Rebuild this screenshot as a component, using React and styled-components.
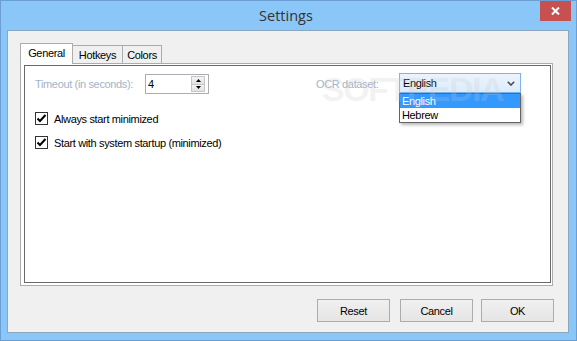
import styled, { createGlobalStyle } from 'styled-components'

const Global = createGlobalStyle`
  html, body { margin: 0; padding: 0; }
  body { width: 577px; height: 341px; overflow: hidden; background: #8ac5f7; }
  * { box-sizing: border-box; }
`;

const Window = styled.div`
  width: 577px;
  height: 341px;
  background: #8bc6f8;
  border: 1px solid #6b9fd3;
  display: flex;
  flex-direction: column;
  font-family: "Liberation Sans", Arial, sans-serif;
  font-size: 11px;
  letter-spacing: -0.35px;
  color: #000;
`;

const TitleBar = styled.div`
  height: 29px;
  display: grid;
  grid-template-columns: 1fr auto 1fr;
  align-items: start;
  padding-right: 5px;
`;

const Title = styled.div`
  grid-column: 2;
  font-family: "Open Sans", "Noto Sans", sans-serif;
  font-size: 14.5px;
  letter-spacing: 0;
  color: #333;
  line-height: 29px;
`;

const CloseBtn = styled.div`
  grid-column: 3;
  justify-self: end;
  width: 31px;
  height: 20px;
  background: #c75050;
  display: flex;
  align-items: center;
  justify-content: center;
`;

const Client = styled.div`
  flex: 1;
  margin: 0 7px 7px 6px;
  background: #f0f0f0;
  border: 1px solid #8da6bf;
  padding: 12px 15px 10px 12px;
  display: flex;
  flex-direction: column;
`;

const Tabs = styled.div`
  display: flex;
  flex-direction: column;
`;

const TabStrip = styled.div`
  display: flex;
  height: 20px;
  align-items: flex-end;
`;

const Tab = styled.div`
  width: ${p => p.w}px;
  height: ${p => (p.active ? 21 : 18)}px;
  margin-left: ${p => (p.first ? 0 : -1)}px;
  margin-bottom: ${p => (p.active ? -1 : 0)}px;
  border: 1px solid #acacac;
  border-bottom: none;
  background: ${p => (p.active ? '#fff' : '#f0f0f0')};
  position: relative;
  z-index: ${p => (p.active ? 2 : 1)};
  display: flex;
  align-items: center;
  justify-content: center;
  padding-bottom: ${p => (p.active ? 2 : 0)}px;
`;

const TabPage = styled.div`
  height: 223px;
  border: 1px solid #acacac;
  background: #fff;
  padding: 1px 1px 2px 3px;
  display: flex;
`;

const Panel = styled.div`
  flex: 1;
  border: 1px solid #6a6a6a;
  padding: 8px 10px;
  position: relative;
  display: flex;
  flex-direction: column;
`;

const Row = styled.div`
  display: flex;
  align-items: center;
  height: 20px;
`;

const Label = styled.div`
  width: ${p => p.w}px;
  margin-left: ${p => p.ml || 0}px;
  color: #a3b3c7;
`;

const SpinBox = styled.div`
  width: 64px;
  height: 20px;
  border: 1px solid #abadb3;
  background: #fff;
  display: flex;
  padding: 1px;
`;

const SpinValue = styled.div`
  flex: 1;
  padding-left: 1px;
  line-height: 16px;
`;

const SpinButtons = styled.div`
  width: 14px;
  margin-right: 2px;
  display: flex;
  flex-direction: column;
`;

const SpinBtn = styled.div`
  flex: 1;
  border: 1px solid #c6c6c6;
  margin-top: ${p => (p.down ? -1 : 0)}px;
  background: linear-gradient(#f4f4f4, #e2e2e2);
  display: flex;
  align-items: center;
  justify-content: center;
`;

const ComboWrap = styled.div`
  position: relative;
  margin-top: -2px;
`;

const Combo = styled.div`
  width: 122px;
  height: 20px;
  border: 1px solid #7eb4ea;
  background: linear-gradient(#ecf4fc, #dcecfc);
  display: flex;
  align-items: center;
  justify-content: space-between;
  padding: 0 5px 0 3px;
`;

const DropList = styled.div`
  position: absolute;
  top: 20px;
  left: 0;
  width: 122px;
  border: 1px solid #646464;
  background: #fff;
  box-shadow: 2px 2px 3px rgba(0, 0, 0, 0.28);
  z-index: 5;
`;

const Option = styled.div`
  height: 14px;
  line-height: 14px;
  padding-left: 2px;
  background: ${p => (p.selected ? '#3399ff' : '#fff')};
  color: ${p => (p.selected ? '#fff' : '#000')};
`;

const Checks = styled.div`
  margin-top: 18px;
  display: flex;
  flex-direction: column;
  gap: 11px;
`;

const CheckRow = styled.label`
  display: flex;
  align-items: center;
  gap: 6px;
  height: 13px;
`;

const Box = styled.span`
  width: 13px;
  height: 13px;
  border: 1px solid #333;
  background: #fff;
  display: flex;
  align-items: center;
  justify-content: center;
`;

const Watermark = styled.div`
  position: absolute;
  left: 297px;
  top: 4px;
  font-size: 34px;
  font-weight: bold;
  letter-spacing: -1.5px;
  color: rgba(200, 200, 200, 0.22);
  pointer-events: none;
  z-index: 9;
`;

const ButtonRow = styled.div`
  margin-top: 13px;
  margin-right: -1px;
  display: flex;
  justify-content: flex-end;
  gap: 8px;
`;

const Button = styled.div`
  width: 73px;
  height: 23px;
  border: 1px solid #acacac;
  background: linear-gradient(#f0f0f0, #e5e5e5);
  display: flex;
  align-items: center;
  justify-content: center;
  margin-right: ${p => p.extra || 0}px;
`;

const Check = () => (
  <svg width="11" height="11" viewBox="0 0 11 11">
    <path d="M1.5 5.5 L4 8 L9.5 2" fill="none" stroke="#000" strokeWidth="2" />
  </svg>
);

export default function App() {
  return (
    <>
      <Global />
      <Window>
        <TitleBar>
          <Title>Settings</Title>
          <CloseBtn>
            <svg width="9" height="8" viewBox="0 0 9 8">
              <path d="M1 0.5 L8 7.5 M8 0.5 L1 7.5" stroke="#fff" strokeWidth="2" />
            </svg>
          </CloseBtn>
        </TitleBar>
        <Client>
          <Tabs>
            <TabStrip>
              <Tab active first w={53}>General</Tab>
              <Tab w={51}>Hotkeys</Tab>
              <Tab w={40}>Colors</Tab>
            </TabStrip>
            <TabPage>
              <Panel>
                <Row>
                  <Label w={110}>Timeout (in seconds):</Label>
                  <SpinBox>
                    <SpinValue>4</SpinValue>
                    <SpinButtons>
                      <SpinBtn>
                        <svg width="5" height="3" viewBox="0 0 5 3"><path d="M2.5 0 L5 3 L0 3 Z" fill="#000" /></svg>
                      </SpinBtn>
                      <SpinBtn down>
                        <svg width="5" height="3" viewBox="0 0 5 3"><path d="M0 0 L5 0 L2.5 3 Z" fill="#000" /></svg>
                      </SpinBtn>
                    </SpinButtons>
                  </SpinBox>
                  <Label w={83} ml={107}>OCR dataset:</Label>
                  <ComboWrap>
                    <Combo>
                      <span>English</span>
                      <svg width="8" height="5" viewBox="0 0 8 5">
                        <path d="M0.8 0.8 L4 4 L7.2 0.8" fill="none" stroke="#4d4d4d" strokeWidth="1.6" />
                      </svg>
                    </Combo>
                    <DropList>
                      <Option selected>English</Option>
                      <Option>Hebrew</Option>
                    </DropList>
                  </ComboWrap>
                </Row>
                <Checks>
                  <CheckRow><Box><Check /></Box>Always start minimized</CheckRow>
                  <CheckRow><Box><Check /></Box>Start with system startup (minimized)</CheckRow>
                </Checks>
                <Watermark>SOFTPEDIA</Watermark>
              </Panel>
            </TabPage>
          </Tabs>
          <ButtonRow>
            <Button extra={2}>Reset</Button>
            <Button>Cancel</Button>
            <Button>OK</Button>
          </ButtonRow>
        </Client>
      </Window>
    </>
  )
}
